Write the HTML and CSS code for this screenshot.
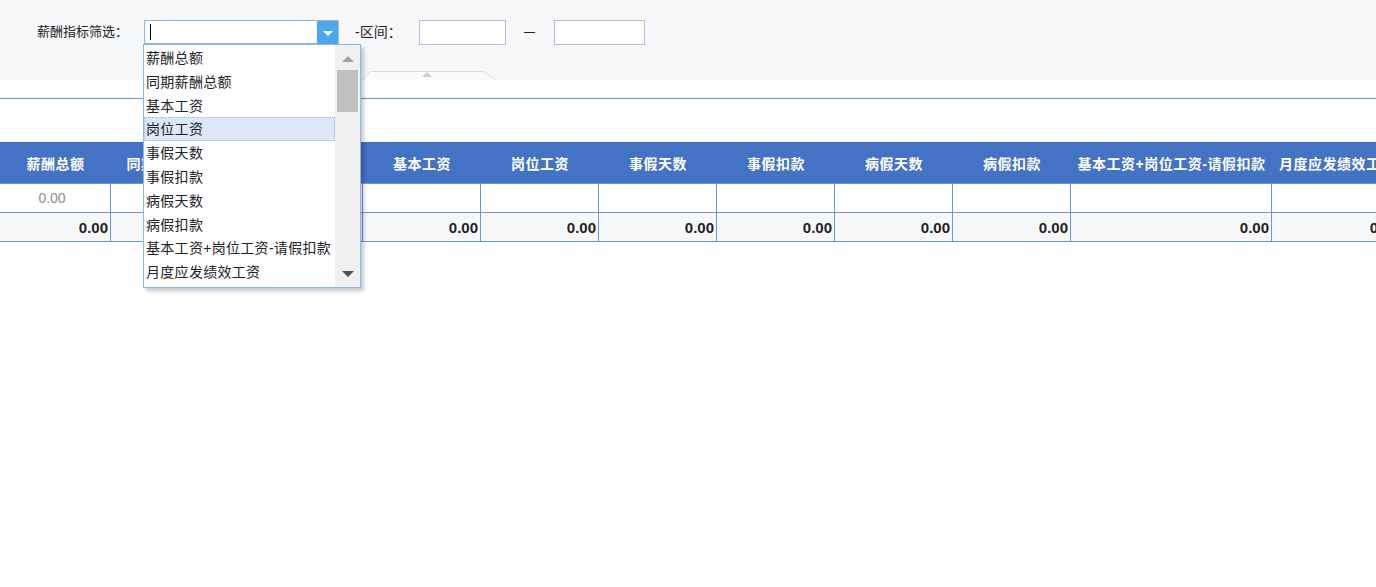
FILE: index.html
```html
<!DOCTYPE html>
<html lang="zh-CN">
<head>
  <meta charset="UTF-8" />
  <meta name="viewport" content="width=device-width, initial-scale=1.0" />
  <title>薪酬指标</title>
  <link rel="stylesheet" href="styles.css">
</head>
<body>
  <div class="filter-bar">
    <label class="filter-label">薪酬指标筛选：</label>
    <div class="combo">
      <div class="combo-input"><span class="caret"></span></div>
      <span class="combo-arrow"></span>
      <div class="combo-panel">
        <ul class="combo-list">
          <li>薪酬总额</li>
          <li>同期薪酬总额</li>
          <li>基本工资</li>
          <li class="hover">岗位工资</li>
          <li>事假天数</li>
          <li>事假扣款</li>
          <li>病假天数</li>
          <li>病假扣款</li>
          <li>基本工资+岗位工资-请假扣款</li>
          <li>月度应发绩效工资</li>
        </ul>
        <div class="scrollbar">
          <span class="scroll-up"></span>
          <span class="scroll-thumb"></span>
          <span class="scroll-down"></span>
        </div>
      </div>
    </div>
    <span class="range-label">-区间：</span>
    <input type="text" class="range-input range-from">
    <span class="range-dash"></span>
    <input type="text" class="range-input range-to">

    <svg class="collapse-tab" width="134" height="10" viewBox="0 0 134 10">
      <path d="M0.5 10 L8.5 1.5 L121.5 1.5 L133.5 10" fill="#fbfbfc" stroke="#dcdcdc" stroke-width="1" />
      <path d="M60 7 L65 2 L70 7 Z" fill="#cfcfcf" />
    </svg>
  </div>

  <div class="divider"></div>

  <div class="grid-wrap">
    <table class="grid">
      <thead>
        <tr>
          <th style="width:111px">薪酬总额</th>
          <th style="width:118px">同期薪酬总额</th>
          <th style="width:134px">同比增长</th>
          <th style="width:118px">基本工资</th>
          <th style="width:118px">岗位工资</th>
          <th style="width:118px">事假天数</th>
          <th style="width:118px">事假扣款</th>
          <th style="width:118px">病假天数</th>
          <th style="width:118px">病假扣款</th>
          <th style="width:201px">基本工资+岗位工资-请假扣款</th>
          <th style="width:130px">月度应发绩效工资</th>
        </tr>
      </thead>
      <tbody>
        <tr class="data-row">
          <td class="center muted">0.00</td>
          <td></td>
          <td></td>
          <td></td>
          <td></td>
          <td></td>
          <td></td>
          <td></td>
          <td></td>
          <td></td>
          <td></td>
        </tr>
        <tr class="sum-row">
          <td>0.00</td>
          <td>0.00</td>
          <td>0.00</td>
          <td>0.00</td>
          <td>0.00</td>
          <td>0.00</td>
          <td>0.00</td>
          <td>0.00</td>
          <td>0.00</td>
          <td>0.00</td>
          <td>0.00</td>
        </tr>
      </tbody>
    </table>
  </div>
</body>
</html>
```

FILE: styles.css
```css
* {
  box-sizing: border-box;
}
html,
body {
  min-height: 100%;
}
body {
  margin: 0;
  min-height: 100vh;
  background: #fff;
  font-family: "Liberation Sans", "Noto Sans CJK SC", sans-serif;
  font-size: 14px;
  color: #222;
}
.filter-bar {
  position: relative;
  z-index: 5;
  height: 80px;
  background: #f7f8fa;
  padding: 20px 0 0 37px;
  display: flex;
  align-items: flex-start;
}
.filter-label {
  width: 107px;
  font-size: 13px;
  line-height: 24px;
  color: #222;
}
.combo {
  position: relative;
  width: 195px;
  height: 24px;
  border: 1px solid #86b6ec;
  background: #fff;
  display: flex;
}
.combo-input {
  flex: 1;
  padding: 3px 0 0 5px;
}
.caret {
  display: block;
  width: 1px;
  height: 16px;
  background: #000;
}
.combo-arrow {
  position: relative;
  width: 22px;
  margin: -1px -1px -1px 0;
  background: #4aa8ee;
  border-top: 1px solid #a9b9c9;
  border-right: 1px solid #a9b9c9;
}
.combo-arrow::after {
  content: "";
  position: absolute;
  left: 6px;
  top: 10px;
  border-left: 5px solid transparent;
  border-right: 5px solid transparent;
  border-top: 5px solid #fff;
}
.combo-panel {
  position: absolute;
  left: -2px;
  top: 23px;
  width: 218px;
  height: 244px;
  border: 1px solid #8cb8ec;
  background: #fff;
  box-shadow: 3px 3px 4px rgba(0, 0, 0, 0.22);
  display: flex;
  z-index: 10;
}
.combo-list {
  flex: 1;
  list-style: none;
  margin: 0;
  padding: 1px 0 0 0;
}
.combo-list li {
  height: 23.8px;
  line-height: 23px;
  padding-left: 1px;
  font-size: 14px;
  letter-spacing: 0.3px;
  color: #222;
  white-space: nowrap;
  border: 1px solid transparent;
}
.combo-list li.hover {
  background: #dde8f8;
  border: 1px dotted #8eb2e2;
}
.scrollbar {
  position: relative;
  width: 25px;
  background: #f0f0f0;
}
.scroll-up,
.scroll-down {
  position: absolute;
  left: 7px;
  width: 0;
  height: 0;
  border-left: 6px solid transparent;
  border-right: 6px solid transparent;
}
.scroll-up {
  top: 11px;
  border-bottom: 6px solid #a3a3a3;
}
.scroll-down {
  bottom: 10px;
  border-top: 6px solid #505050;
}
.scroll-thumb {
  position: absolute;
  left: 2px;
  right: 2px;
  top: 25px;
  height: 42px;
  background: #c1c1c1;
}
.range-label {
  margin-left: 16px;
  width: 64px;
  line-height: 24px;
  font-size: 14px;
}
.range-input {
  height: 25px;
  border: 1px solid #b8bdd0;
  background: #fff;
  padding: 0 4px;
  font-size: 13px;
  outline: none;
}
.range-from {
  width: 87px;
}
.range-to {
  width: 91px;
}
.range-dash {
  width: 11px;
  height: 1px;
  margin: 12px 19px 0 18px;
  background: #222;
}
.collapse-tab {
  position: absolute;
  left: 362px;
  bottom: 0;
}
.divider {
  margin-top: 18px;
  height: 1px;
  background: #6a96d8;
}
.grid-wrap {
  margin-top: 43px;
  width: 100%;
  overflow: hidden;
}
.grid {
  table-layout: fixed;
  width: 1402px;
  border-collapse: separate;
  border-spacing: 0;
}
.grid th {
  height: 42px;
  padding: 0;
  background: #4472c4;
  border-bottom: 1px solid #6d94d8;
  color: #fff;
  font-weight: bold;
  font-size: 14px;
  letter-spacing: 0.5px;
  text-align: center;
  white-space: nowrap;
  overflow: hidden;
}
.grid td {
  height: 29px;
  padding: 0 2px 0 0;
  border-right: 1px solid #6d94d8;
  border-bottom: 1px solid #6d94d8;
  text-align: right;
  font-size: 14px;
  white-space: nowrap;
}
.data-row td {
  background: #fff;
}
.grid td.center {
  text-align: center;
  padding: 0 6px 0 0;
}
.grid td.muted {
  color: #8a8f98;
}
.sum-row td {
  background: #f7f8fa;
  font-weight: bold;
  font-size: 15px;
  color: #222;
}
```
